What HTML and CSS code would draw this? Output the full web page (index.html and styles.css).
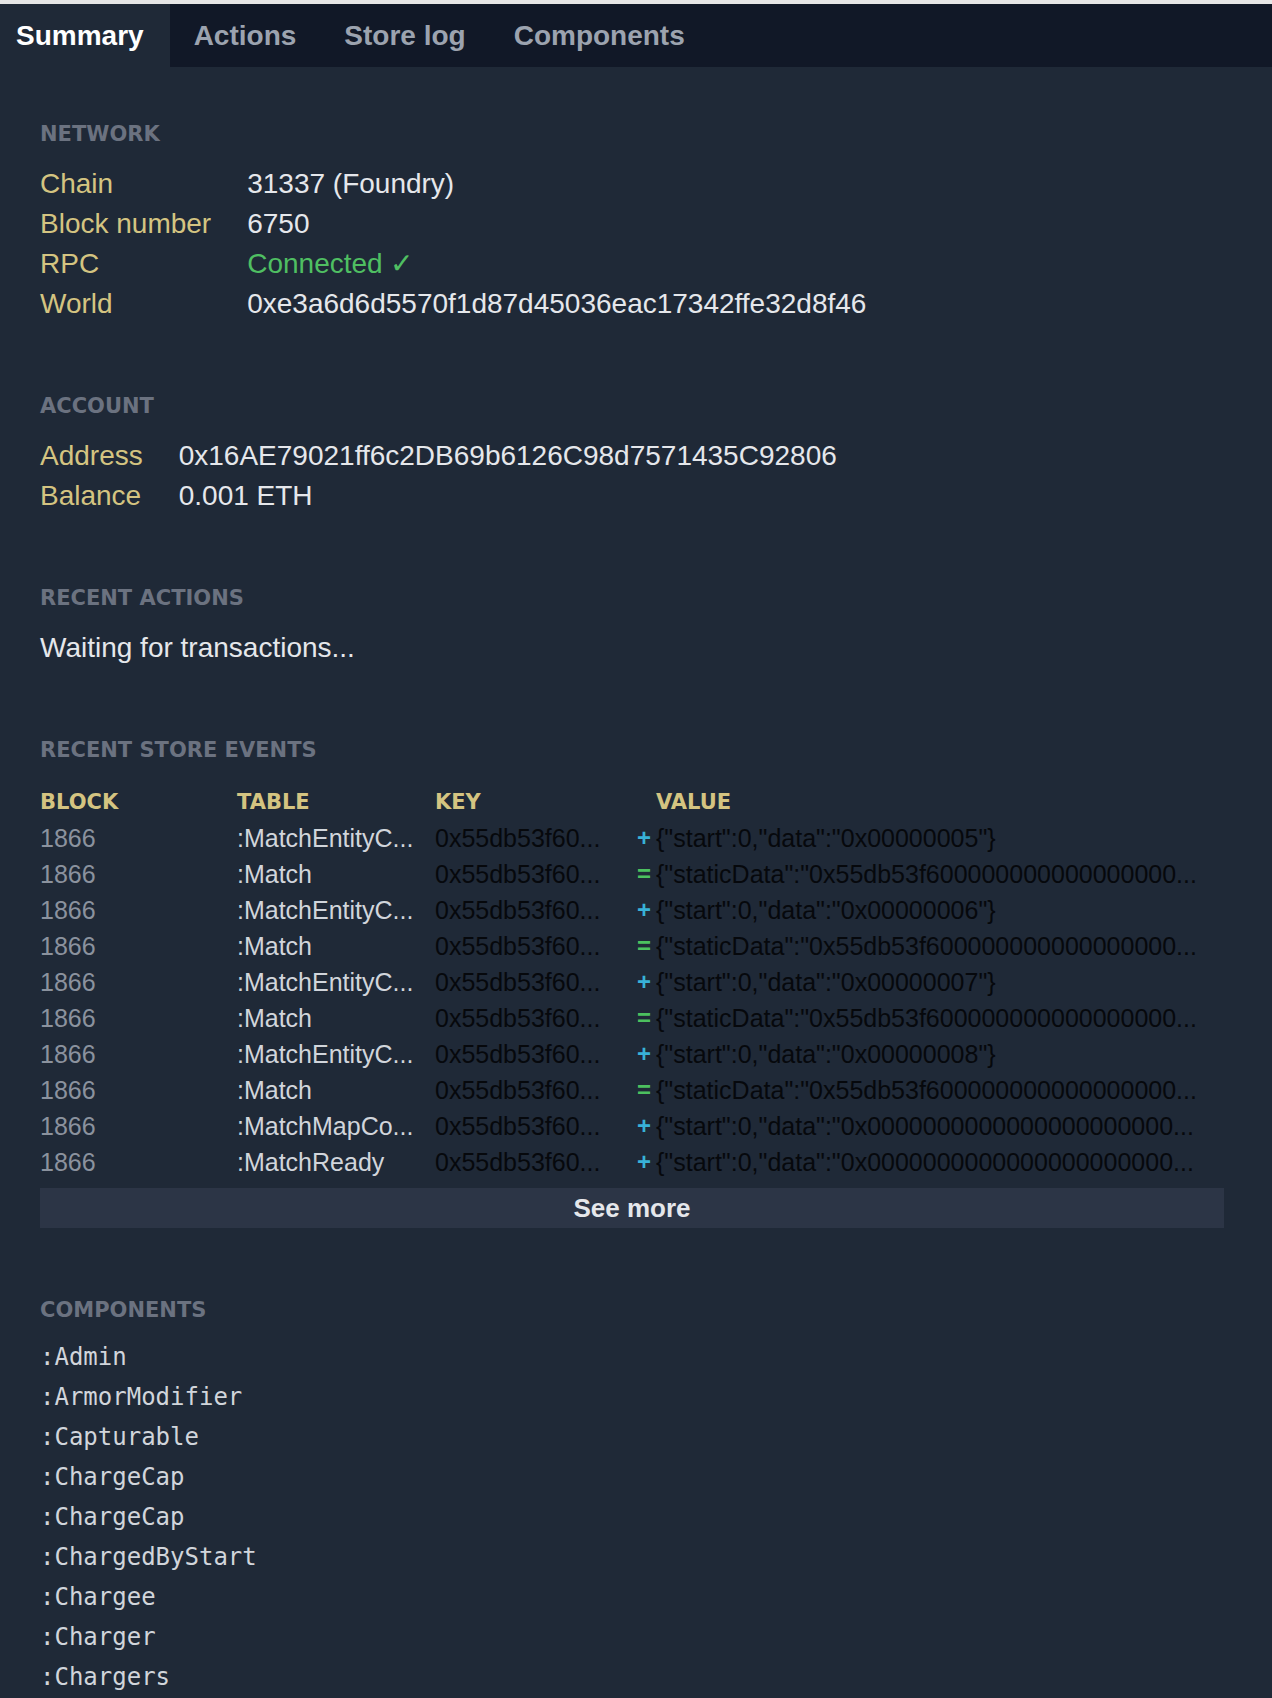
FILE: index.html
```html
<!DOCTYPE html>
<html lang="en">
<head>
<meta charset="utf-8">
<title>Dev tools</title>
<link rel="stylesheet" href="styles.css">
</head>
<body>
<div class="topline"></div>
<nav class="tabs">
  <div class="tab active">Summary</div>
  <div class="tab">Actions</div>
  <div class="tab">Store log</div>
  <div class="tab">Components</div>
</nav>
<main class="content">
  <section class="section">
    <h2 class="heading">Network</h2>
    <table class="kv">
      <tr><td class="k">Chain</td><td class="v">31337 (Foundry)</td></tr>
      <tr><td class="k">Block number</td><td class="v">6750</td></tr>
      <tr><td class="k">RPC</td><td class="v ok">Connected ✓</td></tr>
      <tr><td class="k">World</td><td class="v">0xe3a6d6d5570f1d87d45036eac17342ffe32d8f46</td></tr>
    </table>
  </section>

  <section class="section">
    <h2 class="heading">Account</h2>
    <table class="kv">
      <tr><td class="k">Address</td><td class="v">0x16AE79021ff6c2DB69b6126C98d7571435C92806</td></tr>
      <tr><td class="k">Balance</td><td class="v">0.001 ETH</td></tr>
    </table>
  </section>

  <section class="section">
    <h2 class="heading">Recent actions</h2>
    <p class="waiting">Waiting for transactions...</p>
  </section>

  <section class="section">
    <h2 class="heading">Recent store events</h2>
    <table class="events">
      <colgroup><col class="c-block"><col class="c-table"><col class="c-key"><col></colgroup>
      <thead>
        <tr><th>Block</th><th>Table</th><th>Key</th><th class="th-value">Value</th></tr>
      </thead>
      <tbody>
        <tr><td class="blk">1866</td><td class="tbl">:MatchEntityC...</td><td class="key">0x55db53f60...</td><td class="val"><span class="op set">+</span><span class="txt">{"start":0,"data":"0x00000005"}</span></td></tr>
        <tr><td class="blk">1866</td><td class="tbl">:Match</td><td class="key">0x55db53f60...</td><td class="val"><span class="op eq">=</span><span class="txt">{"staticData":"0x55db53f600000000000000000...</span></td></tr>
        <tr><td class="blk">1866</td><td class="tbl">:MatchEntityC...</td><td class="key">0x55db53f60...</td><td class="val"><span class="op set">+</span><span class="txt">{"start":0,"data":"0x00000006"}</span></td></tr>
        <tr><td class="blk">1866</td><td class="tbl">:Match</td><td class="key">0x55db53f60...</td><td class="val"><span class="op eq">=</span><span class="txt">{"staticData":"0x55db53f600000000000000000...</span></td></tr>
        <tr><td class="blk">1866</td><td class="tbl">:MatchEntityC...</td><td class="key">0x55db53f60...</td><td class="val"><span class="op set">+</span><span class="txt">{"start":0,"data":"0x00000007"}</span></td></tr>
        <tr><td class="blk">1866</td><td class="tbl">:Match</td><td class="key">0x55db53f60...</td><td class="val"><span class="op eq">=</span><span class="txt">{"staticData":"0x55db53f600000000000000000...</span></td></tr>
        <tr><td class="blk">1866</td><td class="tbl">:MatchEntityC...</td><td class="key">0x55db53f60...</td><td class="val"><span class="op set">+</span><span class="txt">{"start":0,"data":"0x00000008"}</span></td></tr>
        <tr><td class="blk">1866</td><td class="tbl">:Match</td><td class="key">0x55db53f60...</td><td class="val"><span class="op eq">=</span><span class="txt">{"staticData":"0x55db53f600000000000000000...</span></td></tr>
        <tr><td class="blk">1866</td><td class="tbl">:MatchMapCo...</td><td class="key">0x55db53f60...</td><td class="val"><span class="op set">+</span><span class="txt">{"start":0,"data":"0x0000000000000000000000...</span></td></tr>
        <tr><td class="blk">1866</td><td class="tbl">:MatchReady</td><td class="key">0x55db53f60...</td><td class="val"><span class="op set">+</span><span class="txt">{"start":0,"data":"0x0000000000000000000000...</span></td></tr>
      </tbody>
    </table>
    <button class="more" type="button">See more</button>
  </section>

  <section class="section">
    <h2 class="heading">Components</h2>
    <ul class="comps">
      <li>:Admin</li>
      <li>:ArmorModifier</li>
      <li>:Capturable</li>
      <li>:ChargeCap</li>
      <li>:ChargeCap</li>
      <li>:ChargedByStart</li>
      <li>:Chargee</li>
      <li>:Charger</li>
      <li>:Chargers</li>
    </ul>
  </section>
</main>
</body>
</html>
```

FILE: styles.css
```css
html, body {
  margin: 0;
  padding: 0;
}

body {
  background: #1f2937;
  font-family: "Liberation Sans", Arial, sans-serif;
  color: #e5e7eb;
}

.topline {
  height: 4px;
  background: #e6e6e6;
}

.tabs {
  display: flex;
  height: 63px;
  background: #111827;
}

.tab {
  display: flex;
  align-items: center;
  padding: 0 24px;
  font-weight: bold;
  font-size: 28px;
  color: #9ca3af;
}

.tab:first-child {
  padding-left: 16px;
  padding-right: 26px;
}

.tab.active {
  background: #1f2937;
  color: #ffffff;
}

.content {
  padding: 53px 48px 40px 40px;
}

.section + .section {
  margin-top: 68px;
}

.heading {
  margin: 0 0 18px;
  padding-top: 2px;
  font-family: "DejaVu Sans", sans-serif;
  font-weight: bold;
  font-size: 21px;
  line-height: 24px;
  text-transform: uppercase;
  color: #6b7280;
}

.kv {
  border-collapse: collapse;
  font-size: 28px;
  line-height: 40px;
}

.kv td {
  padding: 0;
  white-space: nowrap;
}

.kv .k {
  color: #d4c481;
  padding-right: 36px;
}

.kv .v {
  color: #e5e7eb;
}

.kv .v.ok {
  color: #4fbf62;
}

.waiting {
  margin: 0;
  font-size: 28px;
  line-height: 40px;
  color: #e5e7eb;
}

.events {
  width: 100%;
  border-collapse: collapse;
  table-layout: fixed;
}

.c-block { width: 197px; }
.c-table { width: 198px; }
.c-key { width: 202px; }

.events th {
  padding: 4px 0 0;
  height: 36px;
  text-align: left;
  font-family: "DejaVu Sans", sans-serif;
  font-weight: bold;
  font-size: 21px;
  text-transform: uppercase;
  color: #d4c481;
}

.events .th-value {
  padding-left: 19px;
}

.events td {
  padding: 0;
  height: 36px;
  font-size: 25px;
  white-space: nowrap;
  overflow: hidden;
}

.events .blk { color: #8b929e; }
.events .tbl { color: #d1d5db; }
.events .key { color: #06080c; }

.val {
  color: #06080c;
}

.val .op {
  display: inline-block;
  width: 19px;
  font-weight: bold;
  font-size: 24px;
  vertical-align: top;
}

.val .op.set { color: #38b2d8; }
.val .op.eq { color: #4cc05f; }

.val .txt {
  vertical-align: top;
}

.more {
  display: block;
  width: 100%;
  height: 40px;
  margin-top: 8px;
  padding: 0;
  border: 0;
  background: #2c3546;
  color: #e5e7eb;
  font-family: "Liberation Sans", Arial, sans-serif;
  font-weight: bold;
  font-size: 26px;
  cursor: pointer;
}

.comps {
  list-style: none;
  margin: 0;
  padding: 0;
  margin-top: -3px;
  font-family: "DejaVu Sans Mono", monospace;
  font-size: 24px;
  line-height: 40px;
  color: #d1d5db;
}
```
